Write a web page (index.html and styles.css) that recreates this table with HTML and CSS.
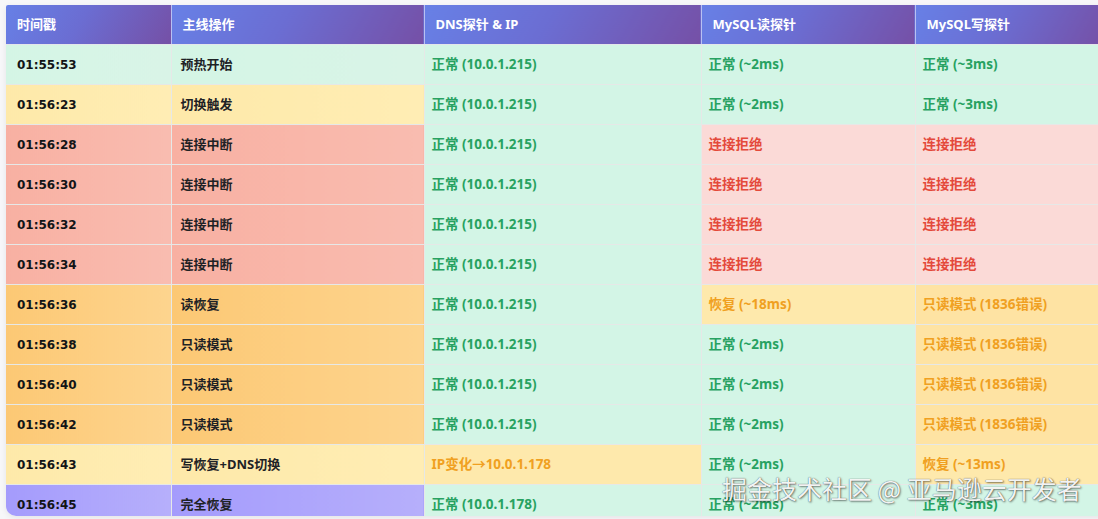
FILE: index.html
```html
<!DOCTYPE html>
<html lang="zh-CN">
<head>
<meta charset="utf-8">
<title>切换时间线</title>
<link rel="stylesheet" href="styles.css">
</head>
<body>
<div class="page">
  <div class="frame">
    <table class="timeline">
      <colgroup>
        <col class="c-time"><col class="c-op"><col class="c-dns"><col class="c-read"><col class="c-write">
      </colgroup>
      <thead>
        <tr><th>时间戳</th><th>主线操作</th><th>DNS探针 &amp; IP</th><th>MySQL读探针</th><th>MySQL写探针</th></tr>
      </thead>
      <tbody>
        <tr class="r-ok"><td class="t">01:55:53</td><td>预热开始</td><td class="s ok">正常 (10.0.1.215)</td><td class="s ok">正常 (~2ms)</td><td class="s ok">正常 (~3ms)</td></tr>
        <tr class="r-trig"><td class="t">01:56:23</td><td>切换触发</td><td class="s ok">正常 (10.0.1.215)</td><td class="s ok">正常 (~2ms)</td><td class="s ok">正常 (~3ms)</td></tr>
        <tr class="r-down"><td class="t">01:56:28</td><td>连接中断</td><td class="s ok">正常 (10.0.1.215)</td><td class="s err">连接拒绝</td><td class="s err">连接拒绝</td></tr>
        <tr class="r-down"><td class="t">01:56:30</td><td>连接中断</td><td class="s ok">正常 (10.0.1.215)</td><td class="s err">连接拒绝</td><td class="s err">连接拒绝</td></tr>
        <tr class="r-down"><td class="t">01:56:32</td><td>连接中断</td><td class="s ok">正常 (10.0.1.215)</td><td class="s err">连接拒绝</td><td class="s err">连接拒绝</td></tr>
        <tr class="r-down"><td class="t">01:56:34</td><td>连接中断</td><td class="s ok">正常 (10.0.1.215)</td><td class="s err">连接拒绝</td><td class="s err">连接拒绝</td></tr>
        <tr class="r-ro"><td class="t">01:56:36</td><td>读恢复</td><td class="s ok">正常 (10.0.1.215)</td><td class="s warn">恢复 (~18ms)</td><td class="s ro">只读模式 (1836错误)</td></tr>
        <tr class="r-ro"><td class="t">01:56:38</td><td>只读模式</td><td class="s ok">正常 (10.0.1.215)</td><td class="s ok">正常 (~2ms)</td><td class="s ro">只读模式 (1836错误)</td></tr>
        <tr class="r-ro"><td class="t">01:56:40</td><td>只读模式</td><td class="s ok">正常 (10.0.1.215)</td><td class="s ok">正常 (~2ms)</td><td class="s ro">只读模式 (1836错误)</td></tr>
        <tr class="r-ro"><td class="t">01:56:42</td><td>只读模式</td><td class="s ok">正常 (10.0.1.215)</td><td class="s ok">正常 (~2ms)</td><td class="s ro">只读模式 (1836错误)</td></tr>
        <tr class="r-trig"><td class="t">01:56:43</td><td>写恢复+DNS切换</td><td class="s warn">IP变化→10.0.1.178</td><td class="s ok">正常 (~2ms)</td><td class="s warn">恢复 (~13ms)</td></tr>
        <tr class="r-full"><td class="t">01:56:45</td><td>完全恢复</td><td class="s ok">正常 (10.0.1.178)</td><td class="s ok">正常 (~2ms)</td><td class="s ok">正常 (~3ms)</td></tr>
      </tbody>
    </table>
  </div>
  <div class="watermark">掘金技术社区 @ 亚马逊云开发者</div>
</div>
</body>
</html>
```

FILE: styles.css
```css
html, body {
  margin: 0;
  padding: 0;
  background: #f7f7f9;
  overflow: hidden;
}

.page {
  position: relative;
  width: 1098px;
  height: 519px;
  padding: 5px 0 0 6px;
  box-sizing: border-box;
}

.frame {
  width: 1098px;
  height: 511px;
  overflow: hidden;
  border-radius: 2px 0 0 10px;
  box-shadow: 0 2px 6px rgba(0, 0, 0, 0.08);
  background: #fff;
}

.timeline {
  width: 1098px;
  table-layout: fixed;
  border-collapse: collapse;
  font-family: "Noto Sans", "Noto Sans CJK SC", sans-serif;
  font-weight: 700;
  font-size: 13px;
  color: #1e2225;
}

.c-time { width: 165px; }
.c-op { width: 253px; }
.c-dns { width: 277px; }
.c-read { width: 214px; }
.c-write { width: 189px; }

.timeline th {
  height: 39px;
  padding: 0 11px;
  text-align: left;
  color: #fff;
  background: linear-gradient(120deg, #6780e6 0%, #6b6dd2 45%, #7550a6 100%);
  border-right: 1px solid #b9c0f2;
  border-bottom: 1px solid #e4e6ea;
  line-height: 1;
}

.timeline td {
  height: 39px;
  padding: 0 9px;
  border: 1px solid #e6e8e7;
  line-height: 1;
  white-space: nowrap;
}

.timeline td:first-child { border-left: none; }

.timeline td.t {
  padding-left: 11px;
  font-family: "DejaVu Sans", sans-serif;
  font-size: 12px;
  font-weight: 700;
  color: #121416;
}

.timeline td.s {
  padding-left: 7px;
  font-size: 13.5px;
}

.r-ok td { background: linear-gradient(90deg, #d4f5e5, #d9f4e7); }
.r-trig td { background: linear-gradient(90deg, #fee9a9, #ffedb4); }
.r-down td { background: linear-gradient(90deg, #f8b0a2, #f9bcb0); }
.r-ro td { background: linear-gradient(90deg, #fcc874, #fdd48e); }
.r-full td { background: linear-gradient(90deg, #a49bfc, #b6affb); }

.timeline td.ok { background: #d3f5e6; color: #27a261; }
.timeline td.err { background: #fbdad7; color: #e4493b; }
.timeline td.warn { background: #fee9ac; color: #f0a021; }
.timeline td.ro { background: #fee3a3; color: #f0a021; }

.watermark {
  position: absolute;
  left: 722px;
  top: 473px;
  font-family: "Noto Sans CJK SC", sans-serif;
  font-size: 25px;
  font-weight: 400;
  line-height: 30px;
  color: rgba(255, 255, 255, 0.96);
  text-shadow: 0 0 1px rgba(0, 0, 0, 0.7), 1px 1px 2px rgba(0, 0, 0, 0.45);
  white-space: nowrap;
}
```
